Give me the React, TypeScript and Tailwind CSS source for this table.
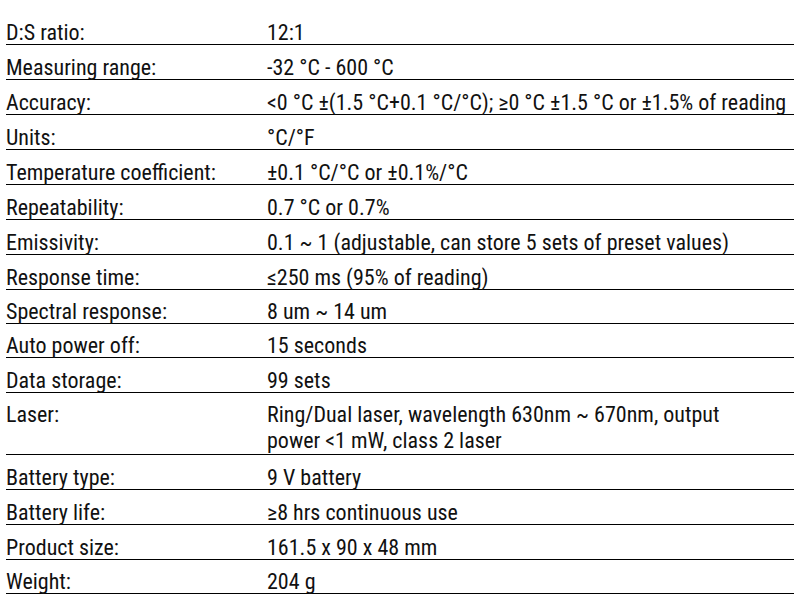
const specs: { label: string; value: string[]; h: string }[] = [
  { label: 'D:S ratio:', value: ['12:1'], h: 'h-[35px]' },
  { label: 'Measuring range:', value: ['-32 °C - 600 °C'], h: 'h-[35px]' },
  { label: 'Accuracy:', value: ['<0 °C ±(1.5 °C+0.1 °C/°C); ≥0 °C ±1.5 °C or ±1.5% of reading'], h: 'h-[35px]' },
  { label: 'Units:', value: ['°C/°F'], h: 'h-[35px]' },
  { label: 'Temperature coefficient:', value: ['±0.1 °C/°C or ±0.1%/°C'], h: 'h-[35px]' },
  { label: 'Repeatability:', value: ['0.7 °C or 0.7%'], h: 'h-[35px]' },
  { label: 'Emissivity:', value: ['0.1 ~ 1 (adjustable, can store 5 sets of preset values)'], h: 'h-[35px]' },
  { label: 'Response time:', value: ['≤250 ms (95% of reading)'], h: 'h-[35px]' },
  { label: 'Spectral response:', value: ['8 um ~ 14 um'], h: 'h-[34px]' },
  { label: 'Auto power off:', value: ['15 seconds'], h: 'h-[34px]' },
  { label: 'Data storage:', value: ['99 sets'], h: 'h-[35px]' },
  {
    label: 'Laser:',
    value: ['Ring/Dual laser, wavelength 630nm ~ 670nm, output', 'power <1 mW, class 2 laser'],
    h: 'h-[62px]',
  },
  { label: 'Battery type:', value: ['9 V battery'], h: 'h-[35px]' },
  { label: 'Battery life:', value: ['≥8 hrs continuous use'], h: 'h-[35px]' },
  { label: 'Product size:', value: ['161.5 x 90 x 48 mm'], h: 'h-[35px]' },
  { label: 'Weight:', value: ['204 g'], h: 'h-[34px]' },
];

export default function App() {
  return (
    <div className="w-[800px] h-[602px] bg-white pt-[10px] pl-[6px] pr-[6px] font-['Roboto_Condensed','Liberation_Sans',sans-serif] text-[22px] text-[#111]">
      {specs.map(row => {
        const multi = row.value.length > 1;
        return (
          <div
            key={row.label}
            className={`flex border-b border-black ${row.h} ${multi ? 'items-start pt-[9px] leading-[26px]' : 'items-end leading-[22px]'}`}
          >
            <div className="w-[261px] shrink-0">{row.label}</div>
            <div className="flex-1">
              {row.value.map(v => (
                <div key={v}>{v}</div>
              ))}
            </div>
          </div>
        );
      })}
    </div>
  );
}
